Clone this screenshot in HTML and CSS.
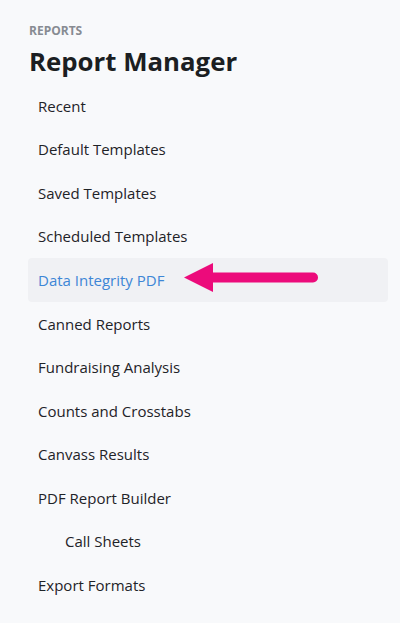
FILE: index.html
```html
<!DOCTYPE html>
<html>
<head>
<meta charset="utf-8">
<link rel="stylesheet" href="styles.css">
</head>
<body>
<div class="panel">
  <div class="eyebrow">Reports</div>
  <h1 class="title">Report Manager</h1>
  <ul class="nav">
    <li class="item">Recent</li>
    <li class="item">Default Templates</li>
    <li class="item">Saved Templates</li>
    <li class="item">Scheduled Templates</li>
    <li class="item active">
      <span class="label">Data Integrity PDF</span>
      <svg class="arrow" width="140" height="32" viewBox="0 0 140 32">
        <line x1="26" y1="15.5" x2="131" y2="15.5" stroke="#ec0b7b" stroke-width="10" stroke-linecap="round"/>
        <polygon points="2,15.5 31,1 31,30" fill="#ec0b7b"/>
      </svg>
    </li>
    <li class="item">Canned Reports</li>
    <li class="item">Fundraising Analysis</li>
    <li class="item">Counts and Crosstabs</li>
    <li class="item">Canvass Results</li>
    <li class="item">PDF Report Builder</li>
    <li class="item sub">Call Sheets</li>
    <li class="item">Export Formats</li>
  </ul>
</div>
</body>
</html>
```

FILE: styles.css
```css
html, body {
  margin: 0;
  padding: 0;
  background: #f8f9fb;
}
body {
  font-family: "Open Sans", "Noto Sans", sans-serif;
  color: #1f2328;
}
.panel {
  padding: 23px 12px 0 28px;
}
.eyebrow {
  font-size: 12px;
  font-weight: 700;
  text-transform: uppercase;
  color: #878b92;
  line-height: 16px;
  padding-left: 1px;
}
.title {
  margin: 5px 0 0 0;
  font-size: 25.8px;
  font-weight: 700;
  line-height: 34px;
  color: #1b1e22;
  padding-left: 1px;
}
.nav {
  list-style: none;
  margin: 6px 0 0 0;
  padding: 0;
}
.item {
  display: flex;
  align-items: center;
  height: 43.55px;
  padding-left: 10px;
  font-size: 15px;
  font-weight: 500;
  color: #1f2328;
  border-radius: 4px;
}
.item.active {
  background: #f0f1f4;
  color: #3d86d6;
}
.label {
  width: 144px;
  flex: none;
}
.arrow {
  display: block;
  margin-top: -4px;
}
.item.sub {
  padding-left: 37px;
}
```
